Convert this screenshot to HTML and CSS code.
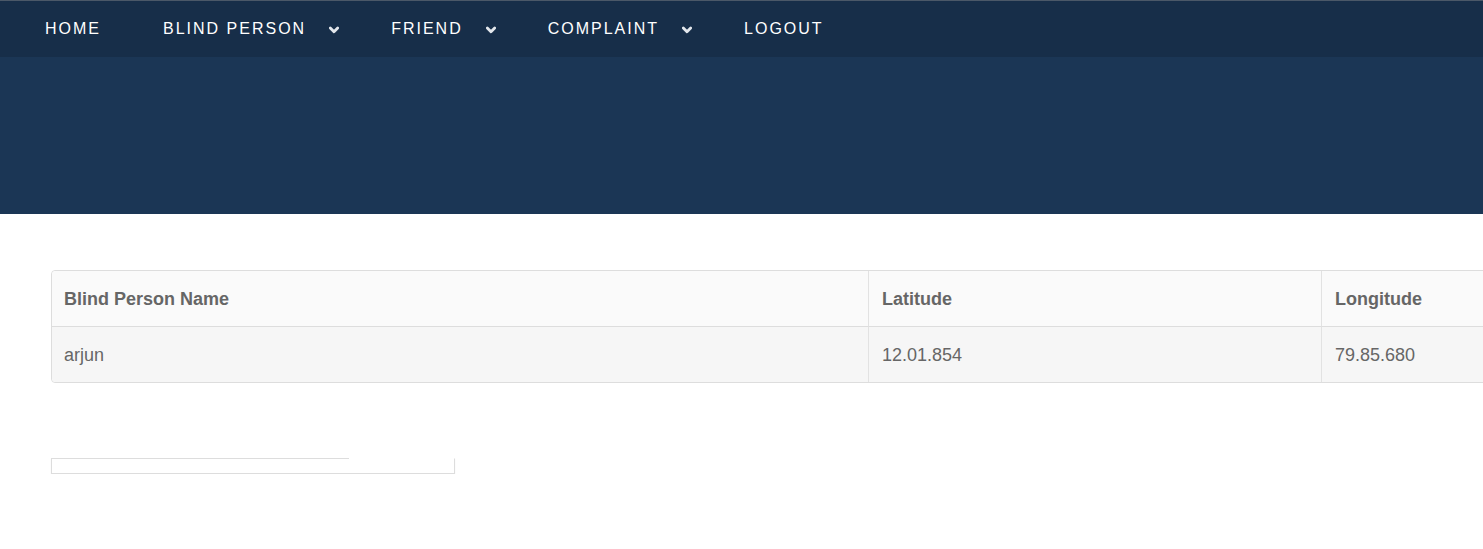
FILE: index.html
```html
<!DOCTYPE html>
<html>
<head>
<meta charset="utf-8">
<title>Blind Person Location</title>
<link rel="stylesheet" href="styles.css">
</head>
<body>
<header class="topbar">
  <nav class="nav">
    <a class="nav-item" href="#">HOME</a>
    <a class="nav-item has-drop" href="#">BLIND PERSON<svg class="chev" viewBox="0 0 10 8"><path d="M1.3 2 L5 5.8 L8.7 2" fill="none" stroke="#e3e7ec" stroke-width="2.8" stroke-linecap="round" stroke-linejoin="round"/></svg></a>
    <a class="nav-item has-drop" href="#">FRIEND<svg class="chev" viewBox="0 0 10 8"><path d="M1.3 2 L5 5.8 L8.7 2" fill="none" stroke="#e3e7ec" stroke-width="2.8" stroke-linecap="round" stroke-linejoin="round"/></svg></a>
    <a class="nav-item has-drop" href="#">COMPLAINT<svg class="chev" viewBox="0 0 10 8"><path d="M1.3 2 L5 5.8 L8.7 2" fill="none" stroke="#e3e7ec" stroke-width="2.8" stroke-linecap="round" stroke-linejoin="round"/></svg></a>
    <a class="nav-item" href="#">LOGOUT</a>
  </nav>
</header>
<section class="hero"></section>
<main class="content">
  <div class="table-wrap">
    <table class="data">
      <colgroup>
        <col class="c1"><col class="c2"><col class="c3">
      </colgroup>
      <thead>
        <tr><th>Blind Person Name</th><th>Latitude</th><th>Longitude</th></tr>
      </thead>
      <tbody>
        <tr><td>arjun</td><td>12.01.854</td><td>79.85.680</td></tr>
      </tbody>
    </table>
  </div>
  <div class="empty-box"></div>
</main>
</body>
</html>
```
FILE: styles.css
```css
html, body {
  margin: 0;
  padding: 0;
  background: #ffffff;
  overflow: hidden;
  font-family: "Liberation Sans", Arial, sans-serif;
}
.topbar {
  border-top: 1px solid #4b5868;
  background: #172e49;
  height: 56px;
}
.nav {
  display: flex;
  align-items: center;
  height: 56px;
  padding-left: 14px;
}
.nav-item {
  display: flex;
  align-items: center;
  padding: 0 31px;
  color: #ffffff;
  text-decoration: none;
  font-size: 16px;
  letter-spacing: 2px;
  height: 100%;
}
.nav-item.has-drop {
  padding-right: 21px;
}
.chev {
  width: 10px;
  height: 8px;
  margin-left: 23px;
  margin-top: 2px;
}
.hero {
  background: #1b3655;
  height: 157px;
}
.content {
  padding: 56px 0 0 51px;
}
.table-wrap {
  overflow: hidden;
}
.data {
  width: 1722px;
  table-layout: fixed;
  border-collapse: separate;
  border-spacing: 0;
  border: 1px solid #dddddd;
  border-radius: 4px;
  color: #666666;
  font-size: 18px;
}
.c1 { width: 816px; }
.c2 { width: 453px; }
.c3 { width: 453px; }
.data th, .data td {
  text-align: left;
  padding: 1px 12px 0;
  height: 54px;
}
.data th {
  background: #fafafa;
  font-weight: bold;
  border-bottom: 1px solid #dddddd;
}
.data td {
  background: #f6f6f6;
}
.data th + th, .data td + td {
  border-left: 1px solid #e2e2e2;
  padding-left: 13px;
}
.data thead th:first-child { border-top-left-radius: 4px; }
.data tbody td:first-child { border-bottom-left-radius: 4px; }
.empty-box {
  position: relative;
  margin-top: 75px;
  width: 402px;
  height: 14px;
  border: 1px solid #dddddd;
  border-top-color: transparent;
  box-shadow: 0 1px 2px rgba(0,0,0,0.04);
}
.empty-box::before {
  content: "";
  position: absolute;
  top: -1px;
  left: -1px;
  width: 298px;
  border-top: 1px solid #dddddd;
}
```
